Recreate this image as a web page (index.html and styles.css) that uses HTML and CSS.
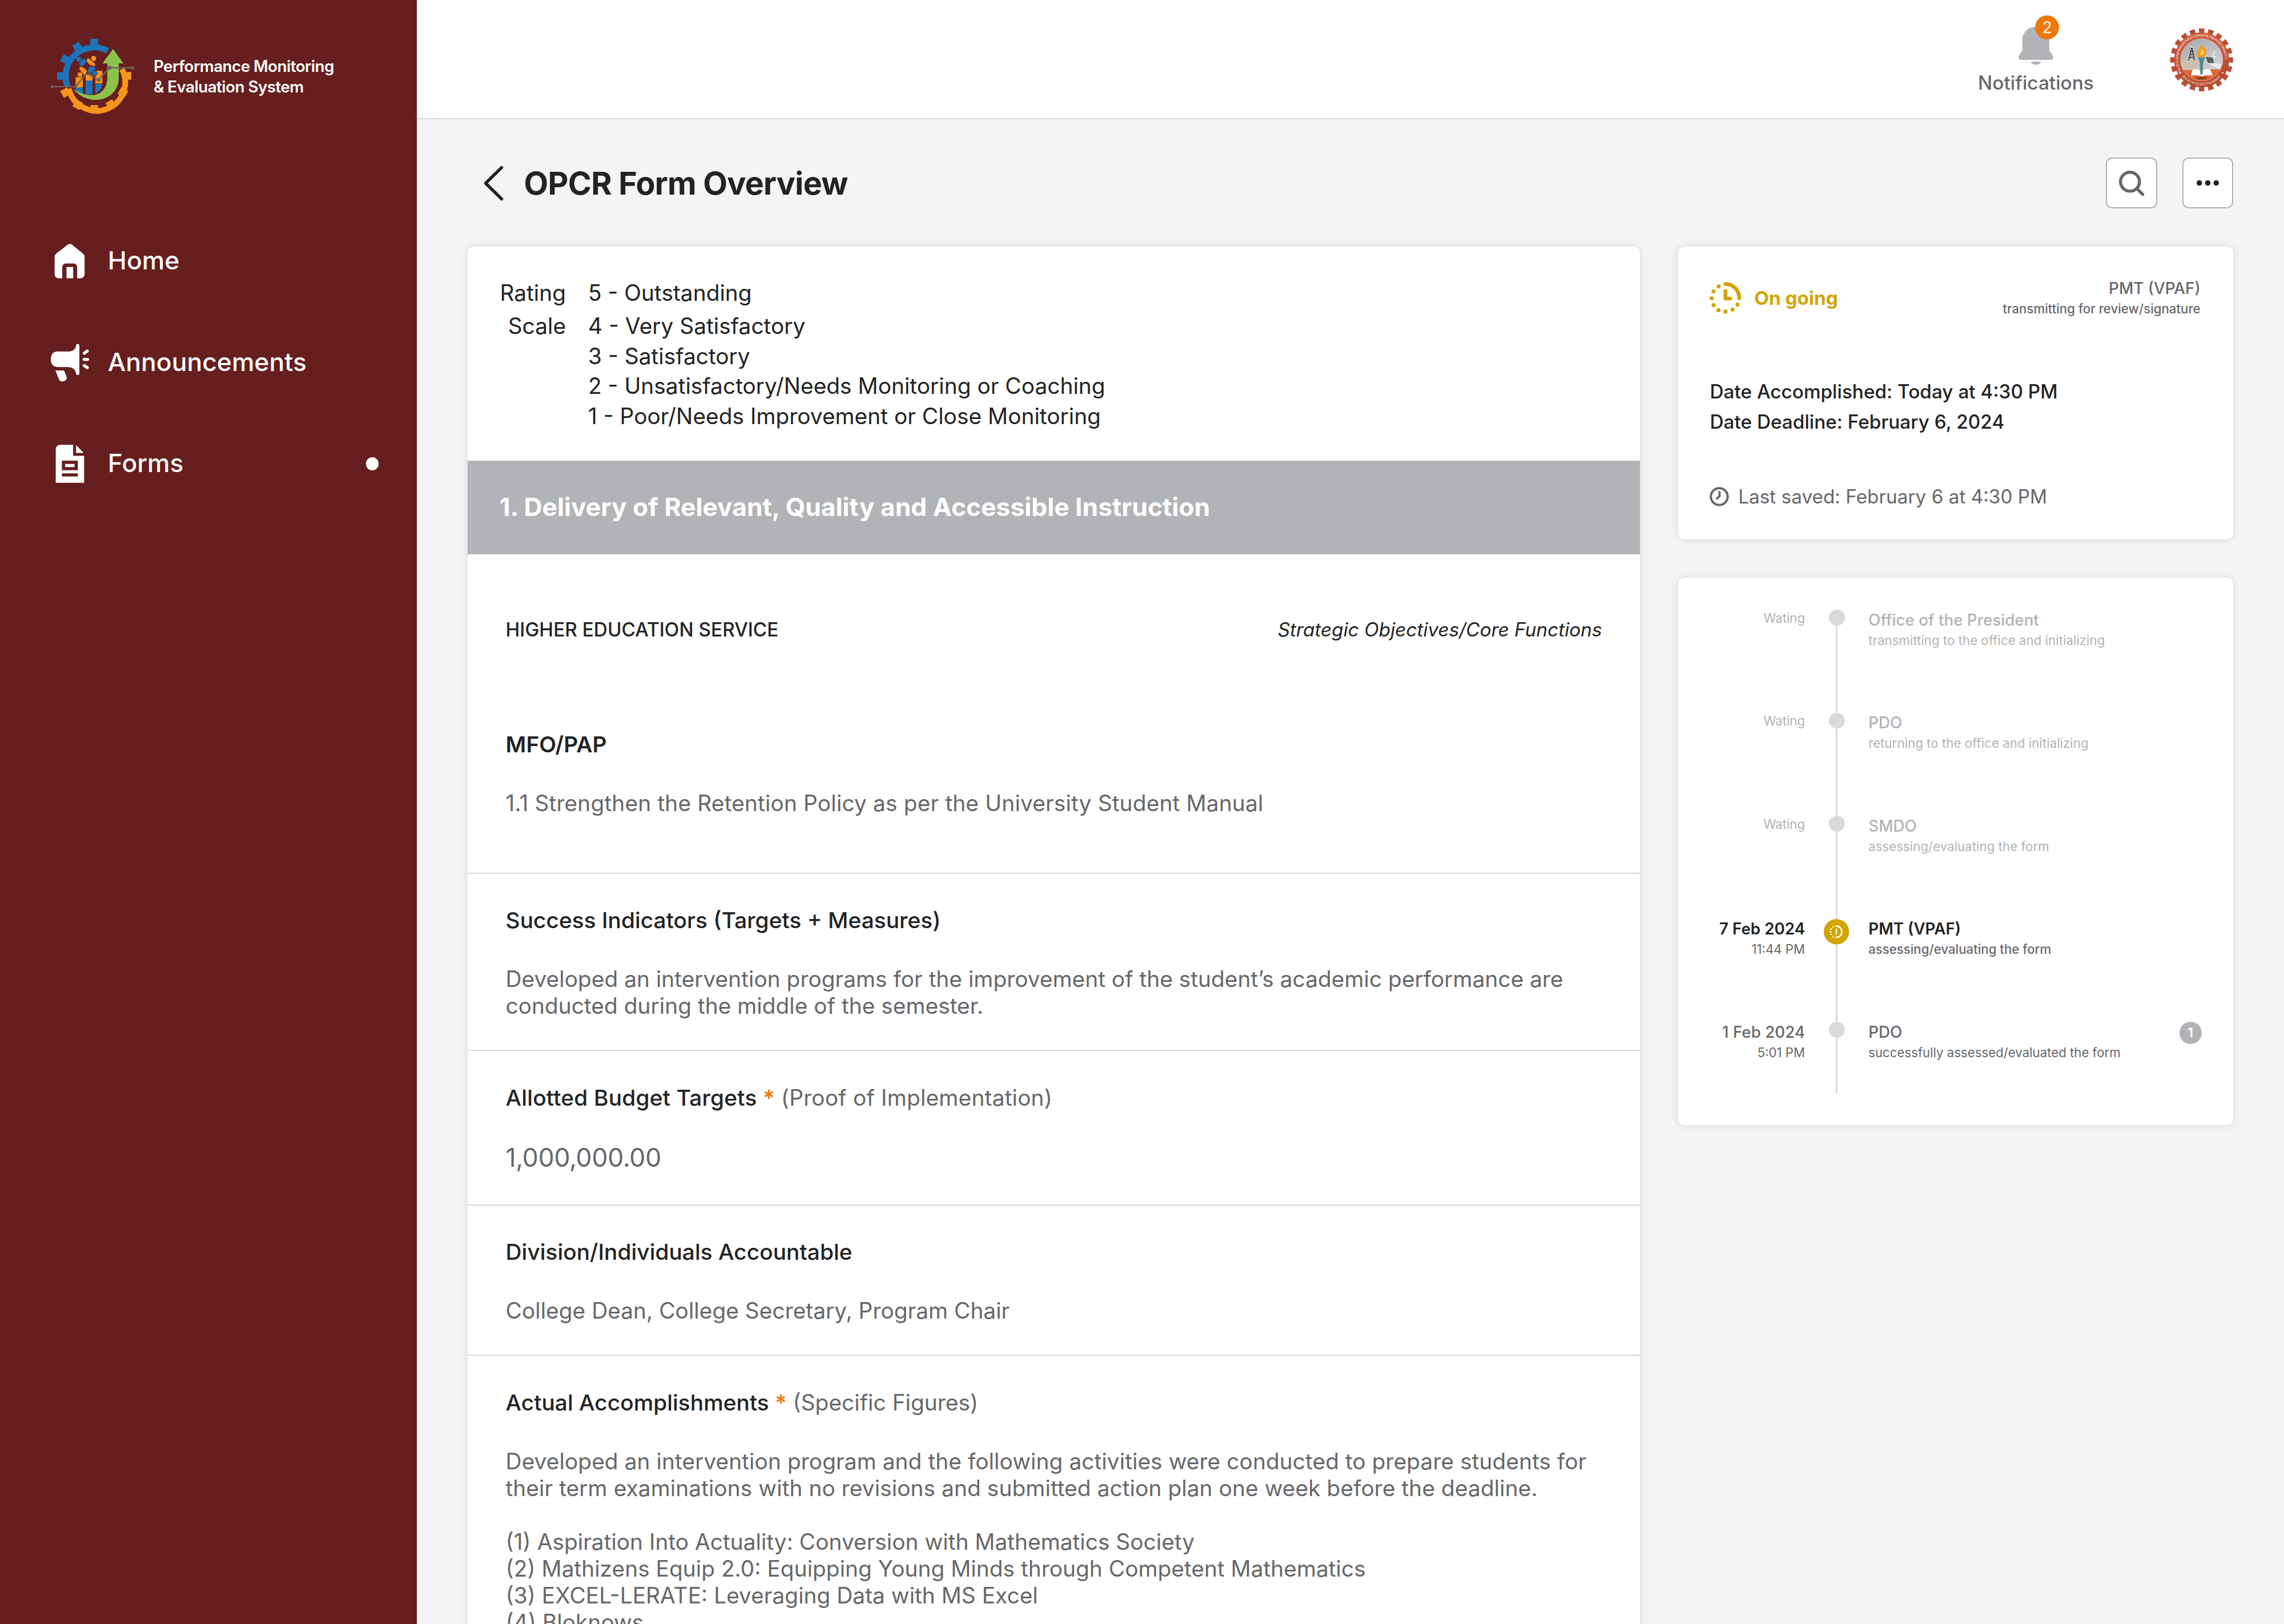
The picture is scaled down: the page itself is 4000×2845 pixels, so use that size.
FILE: index.html
```html
<!DOCTYPE html>
<html lang="en">
<head>
<meta charset="utf-8">
<title>OPCR Form Overview</title>
<link rel="stylesheet" href="styles.css">
</head>
<body>
<div class="app">
  <aside class="sidebar">
    <div class="brand">
      <svg class="brand-logo" viewBox="0 0 155 145">
        <g fill="#1c75bc">
          <rect x="73.2" y="8" width="13.4" height="14"/>
          <rect x="73.2" y="8" width="13.4" height="14" transform="rotate(-30 80 73)"/>
          <rect x="73.2" y="8" width="13.4" height="14" transform="rotate(-60 80 73)"/>
          <rect x="73.2" y="8" width="13.4" height="14" transform="rotate(-90 80 73)"/>
        </g>
        <path d="M33.5 91.5A50 50 0 0 1 103.5 29" fill="none" stroke="#1c75bc" stroke-width="10.5"/>
        <g fill="#f7941d">
          <rect x="73.2" y="8" width="13.4" height="14" transform="rotate(90 80 73)"/>
          <rect x="73.2" y="8" width="13.4" height="14" transform="rotate(120 80 73)"/>
          <rect x="73.2" y="8" width="13.4" height="14" transform="rotate(150 80 73)"/>
          <rect x="73.2" y="8" width="13.4" height="14" transform="rotate(180 80 73)"/>
          <rect x="73.2" y="8" width="13.4" height="14" transform="rotate(210 80 73)"/>
          <rect x="73.2" y="8" width="13.4" height="14" transform="rotate(240 80 73)"/>
        </g>
        <path d="M128.5 61A50 50 0 1 1 35.500 95.500" fill="none" stroke="#f7941d" stroke-width="10"/>
        <path d="M47.500 75h12.500v20l-12.500-2zM65 70.500h12v11h-12zM82 64h12.300v22H82z" fill="#f7941d"/>
        <path d="M47.500 94.500l12.500-2v12q-8-2-12.500-7zM65 81.500h12v24h-12zM82 87h12.300q-2 12-12.300 17z" fill="#1c75bc"/>
        <circle cx="53.200" cy="44" r="4.400" fill="#1c75bc"/>
        <circle cx="79" cy="42.300" r="4.400" fill="#f7941d"/>
        <path d="M62 42l5.500 4.500L59 57.500l-6-5.500z" fill="#1c75bc"/>
        <path d="M68.500 41L81.500 51.500V56L73 54l-6-6z" fill="#f7941d"/>
        <path d="M54.300 57l8 2 5.500 6-4.500 7-9-10z" fill="#f7941d"/>
        <path d="M72 57h9.500v5l-10 8-3.500-6z" fill="#1c75bc"/>
        <circle cx="55" cy="70.700" r="4.600" fill="#f7941d" stroke="#661f1e"/>
        <circle cx="80.700" cy="68.300" r="4.600" fill="#1c75bc" stroke="#661f1e"/>
        <path d="M113 25.700L131 51h-8v26c0 22-18 38-40 38-17 0-31-8-40-20 12 9 24 12 35 11.500C93 105.500 103 93 103 76V51h-8.400z" fill="#8bc34a"/>
        <path d="M6.500 91.700h41L65 70l6 .5L87.500 80 107 58.700h40.500" fill="none" stroke="#6e5f60" stroke-width="2.400"/>
        <g fill="#6e5f60"><circle cx="6.500" cy="91.700" r="2.800"/><circle cx="47.500" cy="91.700" r="2.800"/><circle cx="87.500" cy="80" r="3.300"/><circle cx="107" cy="58.700" r="3.600"/><circle cx="147.500" cy="58.700" r="2.800"/></g>
      </svg>
      <p class="brand-name">Performance Monitoring<br>&amp; Evaluation System</p>
    </div>
    <nav class="nav">
      <a class="nav-item">
        <svg class="nav-icon" viewBox="0 0 24 24"><path fill="#fff" d="M10.600 2.100a2 2 0 0 1 2.800 0l6.800 5.500a3 3 0 0 1 1.100 2.300v10.800a2.500 2.500 0 0 1-2.500 2.500h-2.200v-7a2.300 2.300 0 0 0-2.300-2.300H9.500a2.300 2.300 0 0 0-2.300 2.300v7H4.900a2.500 2.500 0 0 1-2.500-2.500V9.900a3 3 0 0 1 1.100-2.300zM9.900 16.100h4.200v7.100H9.900z"/></svg>
        <span>Home</span>
      </a>
      <a class="nav-item">
        <svg class="nav-icon" viewBox="0 0 24 24"><path fill="#fff" d="M4.200 5.300h6.300c3.300 0 5.100-1.200 5.400-3.900a1.060 1.060 0 0 1 2.100 0v17.900a1.060 1.060 0 0 1-2.100 0c-.3-2.700-2.100-4.200-5.400-4.200H4.200C1.500 15.100 0 13.200 0 10.200s1.500-4.900 4.200-4.900zM2.900 17.300h4.600c.9 0 1.200.5 1.500 1.500l1.100 3c.5 1.900-3.900 3.600-4.900 1.200z"/><path stroke="#fff" stroke-width="1.900" stroke-linecap="round" d="M21.100 6.400l1.900-1.400M21 10.300h2.200M21.100 14.200l1.900 1.300"/></svg>
        <span>Announcements</span>
      </a>
      <a class="nav-item">
        <svg class="nav-icon" viewBox="0 0 24 24.300"><path fill="#fff" fill-rule="evenodd" d="M5.700.1h8.400v7h7v17.200H3V2.800A2.700 2.700 0 0 1 5.700.1zM6.900 10.200v6.100h10.200v-6.100zM9 12.300h6v2H9zM6.900 18.300v2h10.200v-2z"/><path fill="#fff" d="M16 .3l4.800 5H16z"/></svg>
        <span>Forms</span>
        <i class="nav-dot"></i>
      </a>
    </nav>
  </aside>

  <div class="page">
    <header class="topbar">
      <div class="notifications">
        <div class="bell">
          <svg class="bell-icon" viewBox="0 0 61 67"><path fill="#b1b3b6" d="M30.500 0C44 0 54 10 54 23v18.500l6 8.500c2.500 4 0 8-4.500 8h-50C1 58-1.500 54 1 50l5.700-8.500V23C6.700 10 17 0 30.500 0zM21.500 60.800h17.800c-1.500 7.500-16.300 7.500-17.800 0z"/></svg>
          <span class="bell-badge">2</span>
        </div>
        <span class="notifications-label">Notifications</span>
      </div>
      <svg class="avatar" viewBox="10 9.500 111 112">
        <defs>
          <path id="ring-top" d="M31.500 88A41 41 0 1 1 100 88"/>
          <path id="ring-bottom" d="M29 91A45.500 45.500 0 0 0 103 91"/>
          <clipPath id="seal"><circle cx="65.700" cy="65.300" r="37"/></clipPath>
          <linearGradient id="sky" x1="0" x2="1" y1="0" y2="1"><stop offset="0" stop-color="#9fa3a7"/><stop offset="1" stop-color="#d4d5d7"/></linearGradient>
          <linearGradient id="rust" x1="0" x2="0" y1="0" y2="1"><stop offset="0" stop-color="#cf5a3d"/><stop offset="1" stop-color="#b2432a"/></linearGradient>
        </defs>
        <circle cx="65.700" cy="65.300" r="50.500" fill="none" stroke="#bb4f36" stroke-width="9" pathLength="200" stroke-dasharray="5.900 4.100" stroke-dashoffset="2.950" transform="rotate(-90 65.700 65.300)"/>
        <circle cx="65.700" cy="65.300" r="48" fill="url(#rust)"/>
        <g clip-path="url(#seal)">
          <path d="M20 20h90v62H20z" fill="url(#sky)"/>
          <path d="M20 82h90v30H20z" fill="#d9652f"/>
          <path d="M29 67l12-3 20 2v17H28z" fill="#cbbfb2"/>
          <path d="M43 40l10 4-4 1z" fill="#eee"/>
          <path d="M48 44l-5 22M49 44l4 22M46.500 51h4M45.500 56h6M44.500 61h8" fill="none" stroke="#2f2f2f" stroke-width="1.500"/>
          <path d="M72 59l14 2 3 14-13-4z" fill="#56605b" stroke="#e4e4e4"/>
          <path d="M76 71l13 0 12 2-6 8z" fill="#ecebe9"/>
          <path d="M84 60l5-10M86 62l4-3" stroke="#efefef" stroke-width="2.500"/>
          <path d="M47 93l3-11q9-2 15 2 7-4 16-2l4 11q-12-2-19 1-8-3-19-1z" fill="#fff"/>
        </g>
        <path d="M59 61h13l-3.500 8-1.500 22h-3.500l-1.300-22z" fill="#4f8a8b"/>
        <path d="M59 60c-5-7 2-9 2-13 1-6 8-8 7-4 6 1 7 6 5 10 1 5-3 8-7 8z" fill="#f79a1c"/>
        <path d="M63 57c-2-5 3-5 4-11 4 5 3 10 0 11z" fill="#ffd34d"/>
        <circle cx="65.700" cy="65.300" r="37" fill="none" stroke="#e9c8bd" stroke-width=".7"/>
        <text class="seal-text"><textPath href="#ring-top" textLength="152">COLLEGE OF INFORMATION AND COMMUNICATIONS TECHNOLOGY</textPath></text>
        <text class="seal-text"><textPath href="#ring-bottom" startOffset="4" textLength="78">BULACAN STATE UNIVERSITY</textPath></text>
        <text class="seal-year" x="65.700" y="99.500" text-anchor="middle">•2001•</text>
        <g fill="#fff"><circle cx="28" cy="88" r="1.300"/><circle cx="102.500" cy="88" r="1.300"/></g>
      </svg>
    </header>

    <main class="main">
      <div class="title-row">
        <svg class="back" viewBox="0 0 34 60"><path d="M31.500 2.500L3.500 30l28 27.500" fill="none" stroke="#232323" stroke-width="5.400" stroke-linecap="round" stroke-linejoin="round"/></svg>
        <h1 class="title">OPCR Form Overview</h1>
        <button class="tool"><svg class="tool-icon" viewBox="0 0 46 46"><g fill="none" stroke="#666769" stroke-width="5.400" stroke-linecap="round"><circle cx="20.300" cy="20.300" r="16.600"/><path d="M33.500 33.500l9 9"/></g></svg></button>
        <button class="tool"><svg class="tool-icon" viewBox="0 0 46 46"><g fill="#232323"><circle cx="6.500" cy="23" r="5.400"/><circle cx="23" cy="23" r="5.400"/><circle cx="39.500" cy="23" r="5.400"/></g></svg></button>
      </div>

      <div class="columns">
        <article class="card form">
          <section class="rating">
            <p class="rating-label"><span>Rating</span><span>Scale</span></p>
            <ul class="rating-list">
              <li>5 - Outstanding</li>
              <li>4 - Very Satisfactory</li>
              <li>3 - Satisfactory</li>
              <li>2 - Unsatisfactory/Needs Monitoring or Coaching</li>
              <li>1 - Poor/Needs Improvement or Close Monitoring</li>
            </ul>
          </section>
          <h2 class="band">1. Delivery of Relevant, Quality and Accessible Instruction</h2>
          <section class="intro">
            <div class="service">
              <span>HIGHER EDUCATION SERVICE</span>
              <em>Strategic Objectives/Core Functions</em>
            </div>
            <h3 class="field-title strong">MFO/PAP</h3>
            <p class="field-text objective">1.1 Strengthen the Retention Policy as per the University Student Manual</p>
          </section>
          <section class="field">
            <h3 class="field-title">Success Indicators (Targets + Measures)</h3>
            <p class="field-text">Developed an intervention programs for the improvement of the student’s academic performance are<br>conducted during the middle of the semester.</p>
          </section>
          <section class="field">
            <h3 class="field-title budget">Allotted Budget Targets <b>*</b> <small>(Proof of Implementation)</small></h3>
            <p class="field-text amount">1,000,000.00</p>
          </section>
          <section class="field">
            <h3 class="field-title">Division/Individuals Accountable</h3>
            <p class="field-text">College Dean, College Secretary, Program Chair</p>
          </section>
          <section class="field">
            <h3 class="field-title">Actual Accomplishments <b>*</b> <small>(Specific Figures)</small></h3>
            <p class="field-text"><span class="lead">Developed an intervention program and the following activities were conducted to prepare students for<br>their term examinations with no revisions and submitted action plan one week before the deadline.</span><br><br>(1) Aspiration Into Actuality: Conversion with Mathematics Society<br>(2) Mathizens Equip 2.0: Equipping Young Minds through Competent Mathematics<br>(3) EXCEL-LERATE: Leveraging Data with MS Excel<br>(4) Bloknows</p>
          </section>
        </article>

        <div class="side">
          <section class="card status">
            <div class="status-head">
              <svg class="status-icon" viewBox="0 0 55.600 55.600">
                <g fill="none" stroke="#d1a502" stroke-width="6.600" stroke-linecap="round" stroke-linejoin="round"><path d="M27.800 3.600a24.200 24.200 0 0 1 24.200 25"/><path d="M27.800 15.800v13.200h8.700"/></g>
                <g fill="#d1a502"><circle cx="15.800" cy="7.800" r="3.600"/><circle cx="7" cy="16.500" r="3.600"/><circle cx="3.600" cy="28.500" r="3.600"/><circle cx="7" cy="40.600" r="3.600"/><circle cx="15.800" cy="49.400" r="3.600"/><circle cx="28" cy="51.900" r="3.600"/><circle cx="40.200" cy="48.400" r="3.600"/><circle cx="49" cy="39.700" r="3.600"/></g>
              </svg>
              <strong class="status-name">On going</strong>
              <div class="status-office"><span class="office">PMT (VPAF)</span><span class="note">transmitting for review/signature</span></div>
            </div>
            <p class="dates">Date Accomplished: Today at 4:30 PM<br>Date Deadline: February 6, 2024</p>
            <p class="saved"><svg class="saved-icon" viewBox="0 0 34 34"><g fill="none" stroke="#666769" stroke-width="4"><circle cx="17" cy="17" r="14.800"/><path d="M17.500 9v7.200l-4.500 4.300" stroke-linecap="round"/></g></svg>Last saved: February 6 at 4:30 PM</p>
          </section>

          <ol class="card timeline">
            <li class="step waiting">
              <div class="when"><span class="note">Wating</span></div><div class="rail"><i class="dot"></i></div>
              <div class="what"><span class="office">Office of the President</span><span class="note">transmitting to the office and initializing</span></div>
            </li>
            <li class="step waiting">
              <div class="when"><span class="note">Wating</span></div><div class="rail"><i class="dot"></i></div>
              <div class="what"><span class="office">PDO</span><span class="note">returning to the office and initializing</span></div>
            </li>
            <li class="step waiting">
              <div class="when"><span class="note">Wating</span></div><div class="rail"><i class="dot"></i></div>
              <div class="what"><span class="office">SMDO</span><span class="note">assessing/evaluating the form</span></div>
            </li>
            <li class="step current">
              <div class="when"><span class="office">7 Feb 2024</span><span class="note">11:44 PM</span></div>
              <div class="rail"><svg class="dot-current" viewBox="0 0 45 45"><circle cx="22.500" cy="22.500" r="22.500" fill="#d1a502"/><g fill="none" stroke="#fff" stroke-width="2.600" stroke-linecap="round"><path d="M21.800 12.300a10.200 10.200 0 0 1 0 20.400M22.300 18.500v8.200"/></g><g fill="#fff"><circle cx="16.800" cy="13.800" r="1.500"/><circle cx="13.300" cy="17.800" r="1.500"/><circle cx="12" cy="22.500" r="1.500"/><circle cx="13.300" cy="27.200" r="1.500"/><circle cx="16.800" cy="31.200" r="1.500"/></g></svg></div>
              <div class="what"><span class="office">PMT (VPAF)</span><span class="note">assessing/evaluating the form</span></div>
            </li>
            <li class="step">
              <div class="when"><span class="office">1 Feb 2024</span><span class="note">5:01 PM</span></div><div class="rail"><i class="dot"></i></div>
              <div class="what"><span class="office">PDO</span><span class="note">successfully assessed/evaluated the form</span></div>
              <span class="count">1</span>
            </li>
          </ol>
        </div>
      </div>
    </main>
  </div>
</div>
</body>
</html>
```

FILE: styles.css
```css
/* 1rem = 10 layout units */
html { font-size: 27.7778px; }
* { box-sizing: border-box; margin: 0; padding: 0; }
body {
  height: 2845px;
  overflow: hidden;
  font-family: Inter, "Liberation Sans", sans-serif;
  font-size: 1.4rem;
  line-height: 1.21;
  color: #232323;
  background: #f4f4f5;
}
svg { display: block; flex: none; overflow: visible; }
ul, ol { list-style: none; }
span { white-space: nowrap; }

.app { display: flex; height: 2845px; overflow: hidden; }

/* sidebar */
.sidebar { flex: none; width: 26.28rem; background: #661f1e; color: #fff; }
.brand { display: flex; align-items: flex-start; height: 13.24rem; padding: 2.16rem 0 0 3.06rem; }
.brand-logo { width: 155px; height: 145px; }
.brand-name { margin: 1.38rem 0 0 1.04rem; font-size: 1rem; font-weight: 600; line-height: 1.3; letter-spacing: -.019em; white-space: nowrap; }
.nav-item { display: flex; align-items: center; gap: 1.2rem; height: 6.4rem; padding: 0 2.4rem 0 3.2rem; font-size: 1.6rem; font-weight: 500; }
.nav-icon { width: 2.4rem; height: 2.4rem; }
.nav-dot { width: .82rem; height: .82rem; margin-left: auto; border-radius: 50%; background: #fff; }

/* top bar */
.page { flex: 1; min-width: 0; }
.topbar { display: flex; align-items: center; justify-content: flex-end; gap: 4.8rem; height: 7.54rem; padding: .1rem 3.2rem 0 0; background: #fff; border-bottom: .1rem solid #d9d9db; }
.notifications { display: flex; flex-direction: column; align-items: center; gap: .4rem; padding-top: .05rem; color: #666769; }
.notifications-label { font-size: 1.2rem; font-weight: 500; }
.bell { position: relative; }
.bell-icon { width: 61px; height: 67px; }
.bell-badge { position: absolute; left: 1.05rem; top: -.7rem; width: 1.52rem; height: 1.52rem; border-radius: 50%; background: #ee780b; color: #fff; font-size: 1rem; line-height: 1.52rem; text-align: center; }
.avatar { width: 4rem; height: 4.04rem; }
.seal-text { font-family: "Liberation Serif", serif; font-size: 6.400px; fill: #fbe6de; }
.seal-year { font-family: "Liberation Serif", serif; font-size: 7px; font-weight: 700; fill: #3b1208; }

/* title */
.main { padding: 2.4rem 3.2rem 0; }
.title-row { display: flex; align-items: center; height: 3.2rem; margin-bottom: 2.4rem; }
.back { width: 34px; height: 60px; margin: 0 1.33rem 0 1rem; }
.title { flex: 1; font-size: 2rem; font-weight: 650; letter-spacing: -.014em; }
.tool { display: flex; align-items: center; justify-content: center; width: 3.22rem; height: 3.22rem; margin-left: 1.58rem; border: .1rem solid #b1b3b6; border-radius: .4rem; background: #fff; }
.tool-icon { width: 46px; height: 46px; }
.tool:last-child .tool-icon { width: 41px; height: 41px; }

/* cards */
.columns { display: flex; align-items: flex-start; gap: 2.4rem; }
.card { background: #fff; border-radius: .4rem; box-shadow: 0 0 .5rem rgba(0, 0, 0, .12); }
.form { flex: 1; min-width: 0; height: 2500px; overflow: hidden; }
.rating { display: flex; gap: 1.4rem; height: 13.5rem; padding-top: 2rem; line-height: 1.9rem; }
.rating-label { display: flex; flex-direction: column; width: 6.2rem; text-align: right; gap: .175rem; }
.rating-list li:first-child { margin-bottom: .175rem; }
.band { height: 5.9rem; padding-left: 2rem; background: #b1b3b6; color: #fff; font-size: 1.6rem; font-weight: 700; line-height: 5.9rem; letter-spacing: -.001em; }
.intro { height: 20.1rem; padding: 4.06rem 2.4rem 0; }
.service { display: flex; justify-content: space-between; margin-bottom: 5.64rem; font-size: 1.2rem; }
.service span { font-weight: 500; }
.field { padding: 2.07rem 2.4rem 1.95rem; border-top: .1rem solid #d9d9db; }
.field-title { margin-bottom: 2.01rem; font-size: 1.4rem; font-weight: 500; }
.field-title.strong { font-weight: 600; }
.field-title b { color: #ee780b; font-weight: 600; }
.field-title small { font-size: inherit; font-weight: 400; color: #666769; }
.field-title.budget { letter-spacing: .0045em; }
.field-text { color: #666769; white-space: nowrap; }
.objective { letter-spacing: .0036em; }
.lead { letter-spacing: .0013em; }
.amount { font-size: 1.6rem; letter-spacing: -.005em; }

/* status */
.side { display: flex; flex-direction: column; gap: 2.43rem; flex: none; width: 35rem; }
.status { height: 18.48rem; padding: 2.06rem 2rem 0; }
.status-head { display: flex; align-items: center; margin-bottom: 4rem; }
.status-icon { width: 2rem; height: 2rem; }
.status-name { margin-left: .8rem; font-size: 1.2rem; font-weight: 700; color: #d1a502; }
.status-office { display: flex; flex-direction: column; align-items: flex-end; gap: .19rem; margin: 0 .07rem 0 auto; color: #666769; }
.office { font-size: 1rem; font-weight: 500; }
.note { font-size: .8rem; }
.status-office .note { font-weight: 500; }
.dates { margin-top: -.2rem; font-size: 1.2rem; font-weight: 500; line-height: 1.9rem; }
.saved { display: flex; align-items: center; gap: .57rem; margin-top: 3.03rem; font-size: 1.2rem; color: #666769; }
.saved-icon { width: 1.22rem; height: 1.22rem; }

/* timeline */
.timeline { padding: 2rem 2rem 2rem 0; }
.step { display: flex; gap: 1.2rem; height: 6.5rem; color: #666769; }
.step:last-child { height: 4.5rem; }
.when, .what { display: flex; flex-direction: column; gap: .19rem; padding-top: .06rem; }
.when { align-items: flex-end; width: 8rem; }
.rail { width: 1.6rem; display: flex; justify-content: center; align-items: flex-start; background: linear-gradient(#d9d9d9, #d9d9d9) center / .1rem 100% no-repeat; }
.dot { width: 1rem; height: 1rem; border-radius: 50%; background: #d9d9d9; }
.dot-current { width: 1.6rem; height: 1.6rem; }
.waiting { color: #b1b3b6; }
.waiting .what .note { letter-spacing: .002em; }
.current .office { color: #232323; font-weight: 600; }
.current .what .note { font-weight: 500; }
.count { width: 1.4rem; height: 1.4rem; margin-left: auto; border-radius: 50%; background: #b1b3b6; color: #fff; font-size: .8rem; font-weight: 700; line-height: 1.4rem; text-align: center; }
```
